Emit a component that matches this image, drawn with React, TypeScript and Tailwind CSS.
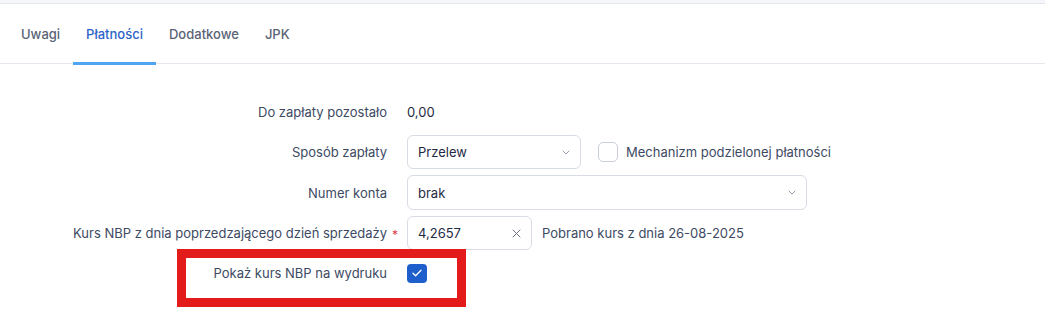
import { useState } from 'react';

const tabs = ['Uwagi', 'Płatności', 'Dodatkowe', 'JPK'];

function Chevron() {
  return (
    <svg width="8" height="5" viewBox="0 0 8 5" fill="none" className="shrink-0">
      <path d="M1 1l3 3 3-3" stroke="#98a1b3" strokeWidth="1" strokeLinecap="round" strokeLinejoin="round" />
    </svg>
  );
}

function Select({ value, width }: { value: string; width: string }) {
  return (
    <div
      className={`flex h-full items-center justify-between rounded-[6px] border border-[#d8dce5] bg-white pl-[10px] pr-[10px] text-[13px] text-[#1f2a44] ${width}`}
    >
      <span className="pt-[2px]">{value}</span>
      <Chevron />
    </div>
  );
}

function Label({ children, required }: { children: string; required?: boolean }) {
  return (
    <div className="relative flex h-full items-center justify-end pt-[2px] text-[13px] text-[#3d4a63]">
      {children}
      {required && <span className="absolute -right-[11px] top-[10px] text-[12px] text-[#e0384a]">*</span>}
    </div>
  );
}

export default function App() {
  const [active, setActive] = useState('Płatności');
  const [split, setSplit] = useState(false);
  const [showRate, setShowRate] = useState(true);

  return (
    <div
      className="relative h-[316px] w-[1045px] overflow-hidden bg-white"
      style={{ fontFamily: 'Inter, "Noto Sans", sans-serif' }}
    >
      <div className="h-[4px] border-b border-[#e4e6ee] bg-[#f5f6fa]" />

      {/* Tabs */}
      <div className="flex h-[60px] border-b border-[#e6e8ef] pl-[8px]">
        {tabs.map((t) => (
          <button
            key={t}
            type="button"
            onClick={() => setActive(t)}
            className={`-mb-px flex h-[61px] items-center px-[13px] pt-[4px] text-[13px] font-medium ${
              active === t
                ? 'border-b-[3px] border-[#4ea6f2] text-[#2f64c8]'
                : 'border-b-[3px] border-transparent text-[#5a6476]'
            }`}
          >
            {t}
          </button>
        ))}
      </div>

      {/* Form */}
      <div className="grid grid-cols-[387px_1fr] gap-x-[20px] gap-y-[6px] pt-[31px]">
        <div className="h-[34px]">
          <Label>Do zapłaty pozostało</Label>
        </div>
        <div className="flex h-[34px] items-center pt-[2px] text-[13px] text-[#1f2a44]">0,00</div>

        <div className="h-[34px]">
          <Label>Sposób zapłaty</Label>
        </div>
        <div className="flex h-[34px] items-center">
          <Select value="Przelew" width="w-[174px]" />
          <label className="ml-[17px] flex cursor-pointer items-center gap-[8px] text-[13px] text-[#3d4a63]">
            <span
              onClick={() => setSplit(!split)}
              className={`h-[20px] w-[20px] rounded-[5px] border ${
                split ? 'border-[#1f5fcc] bg-[#1f5fcc]' : 'border-[#c9ced8] bg-white'
              }`}
            />
            <span className="pt-[2px]">Mechanizm podzielonej płatności</span>
          </label>
        </div>

        <div className="h-[35px]">
          <Label>Numer konta</Label>
        </div>
        <div className="h-[35px]">
          <Select value="brak" width="w-[400px]" />
        </div>

        <div className="h-[34px]">
          <Label required>Kurs NBP z dnia poprzedzającego dzień sprzedaży</Label>
        </div>
        <div className="flex h-[34px] items-center">
          <div className="flex h-full w-[125px] items-center justify-between rounded-[6px] border border-[#d8dce5] pl-[10px] pr-[10px] text-[13px] text-[#1f2a44]">
            <span className="pt-[2px]">4,2657</span>
            <svg width="9" height="9" viewBox="0 0 9 9" fill="none">
              <path d="M1 1l7 7M8 1L1 8" stroke="#6b7385" strokeWidth="1" strokeLinecap="round" />
            </svg>
          </div>
          <span className="ml-[10px] pt-[2px] text-[13px] text-[#3d4a63]">Pobrano kurs z dnia 26-08-2025</span>
        </div>

        <div className="h-[34px]">
          <Label>Pokaż kurs NBP na wydruku</Label>
        </div>
        <div className="flex h-[34px] items-center">
          <span
            onClick={() => setShowRate(!showRate)}
            className={`flex h-[19px] w-[20px] cursor-pointer items-center justify-center rounded-[4px] ${
              showRate ? 'bg-[#1f5fcc]' : 'border border-[#c9ced8] bg-white'
            }`}
          >
            {showRate && (
              <svg width="10" height="8" viewBox="0 0 10 8" fill="none">
                <path d="M1 4.2l2.6 2.6L9 1.2" stroke="white" strokeWidth="1.3" strokeLinecap="round" strokeLinejoin="round" />
              </svg>
            )}
          </span>
        </div>
      </div>

      {/* Annotation box */}
      <div className="pointer-events-none absolute left-[177px] top-[249px] h-[58px] w-[289px] border-[9px] border-[#e41b1b]" />
    </div>
  );
}
